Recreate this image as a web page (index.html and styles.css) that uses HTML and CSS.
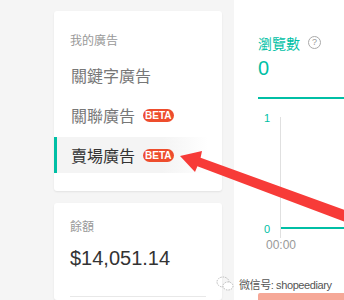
FILE: index.html
```html
<!DOCTYPE html>
<html lang="zh-Hant">
<head>
    <meta charset="UTF-8">
    <meta name="viewport" content="width=device-width, initial-scale=1.0">
    <title>我的廣告</title>
    <link rel="stylesheet" href="styles.css">
</head>
<body>
    <div class="page">
        <div class="side">
            <div class="card menu">
                <div class="menu-title">我的廣告</div>
                <div class="menu-item">關鍵字廣告</div>
                <div class="menu-item">關聯廣告<span class="beta">BETA</span></div>
                <div class="menu-item active">賣場廣告<span class="beta">BETA</span></div>
            </div>
            <div class="card balance">
                <div class="balance-title">餘額</div>
                <div class="balance-value">$14,051.14</div>
                <div class="divider"></div>
            </div>
        </div>
        <div class="main">
            <div class="stat">
                <div class="stat-title">瀏覽數<span class="help">?</span></div>
                <div class="stat-value">0</div>
            </div>
            <svg class="chart" width="86" height="150" viewBox="0 0 86 150">
                <text x="12" y="17" class="tick" text-anchor="end">1</text>
                <text x="12" y="128" class="tick" text-anchor="end">0</text>
                <line x1="22.5" y1="12" x2="22.5" y2="133" stroke="#e0e0e0" stroke-width="1"/>
                <line x1="23" y1="123" x2="86" y2="123" stroke="#00bfa5" stroke-width="2"/>
                <text x="23" y="144" class="time" text-anchor="middle">00:00</text>
            </svg>
            <div class="btn"></div>
        </div>
    </div>

    <svg class="arrow" width="344" height="300" viewBox="0 0 344 300">
        <polygon points="180,156 202,151 200.6,157.8 360,215.6 356,226 197.4,166.2 195,172" fill="#f73b38"/>
    </svg>

    <div class="watermark">
        <svg width="18" height="16" viewBox="0 0 18 16">
            <ellipse cx="7" cy="6" rx="6" ry="5" fill="none" stroke="#bbb" stroke-dasharray="1.5 1"/>
            <ellipse cx="12" cy="10" rx="5" ry="4" fill="#fff" stroke="#bbb" stroke-dasharray="1.5 1"/>
        </svg>
        <span>微信号: shopeediary</span>
    </div>
</body>
</html>
```

FILE: styles.css
```css
html, body{
    margin: 0;
    padding: 0;
    height: 300px;
    overflow: hidden;
}
body{
    background-color: #f5f5f5;
    font-family: "Liberation Sans", "Noto Sans CJK TC", sans-serif;
    position: relative;
}
.page{
    display: flex;
    padding-left: 54px;
    height: 300px;
    overflow: hidden;
}
.side{
    width: 168px;
    padding-top: 11px;
    display: flex;
    flex-direction: column;
    gap: 12px;
}
.card{
    background-color: #fff;
    border-radius: 3px;
    box-shadow: 0 1px 2px rgba(0, 0, 0, 0.08);
}
.menu{
    padding: 20px 0 18px;
}
.menu-title{
    padding-left: 16px;
    font-size: 12px;
    line-height: 20px;
    color: #999;
    margin-bottom: 6px;
}
.menu-item{
    display: flex;
    align-items: center;
    height: 36px;
    margin-top: 4px;
    margin-right: 14px;
    padding-left: 17px;
    font-size: 16px;
    color: #777;
}
.menu-item:first-of-type{
    margin-top: 0;
}
.menu-item.active{
    color: #333;
    border-left: 3px solid #00bfa5;
    padding-left: 14px;
    background: linear-gradient(to right, #f4f4f4 70%, #fff);
}
.beta{
    display: inline-block;
    margin-left: 8px;
    height: 13px;
    line-height: 13px;
    padding: 0 2px;
    border-radius: 7px;
    background-color: #ee4d2d;
    color: #fff;
    font-size: 10px;
    font-weight: bold;
    font-family: "Liberation Sans", sans-serif;
}
.balance{
    flex: 1;
    padding: 14px 16px 0;
}
.balance-title{
    font-size: 12px;
    line-height: 20px;
    color: #999;
}
.balance-value{
    margin-top: 9px;
    font-size: 20px;
    line-height: 24px;
    color: #333;
}
.divider{
    margin-top: 26px;
    border-top: 1px solid #e8e8e8;
}
.main{
    flex: 1;
    margin-left: 12px;
    background-color: #fff;
    padding: 34px 0 0 24px;
}
.stat{
    border-bottom: 2px solid #00bfa5;
    padding-bottom: 17px;
}
.stat-title{
    display: flex;
    align-items: center;
    font-size: 14px;
    line-height: 20px;
    color: #00bfa5;
}
.help{
    display: inline-block;
    margin-left: 8px;
    width: 11px;
    height: 11px;
    line-height: 11px;
    border: 1px solid #aaa;
    border-radius: 50%;
    color: #999;
    font-size: 9px;
    text-align: center;
    margin-top: -3px;
}
.stat-value{
    margin-top: 2px;
    font-size: 20px;
    line-height: 24px;
    color: #00bfa5;
}
.chart{
    display: block;
    margin-top: 6px;
}
.tick{
    font-size: 11px;
    fill: #00bfa5;
    font-family: "Liberation Sans", sans-serif;
}
.time{
    font-size: 12px;
    fill: #999;
    font-family: "Liberation Sans", sans-serif;
}
.btn{
    margin-top: 38px;
    height: 7px;
    background-color: #f6a898;
    border-radius: 2px 0 0 0;
}
.arrow{
    position: absolute;
    left: 0;
    top: 0;
    pointer-events: none;
}
.watermark{
    position: absolute;
    left: 216px;
    top: 276px;
    display: flex;
    align-items: center;
    gap: 5px;
    font-size: 11px;
    letter-spacing: -0.4px;
    color: #555;
    white-space: nowrap;
}
```
